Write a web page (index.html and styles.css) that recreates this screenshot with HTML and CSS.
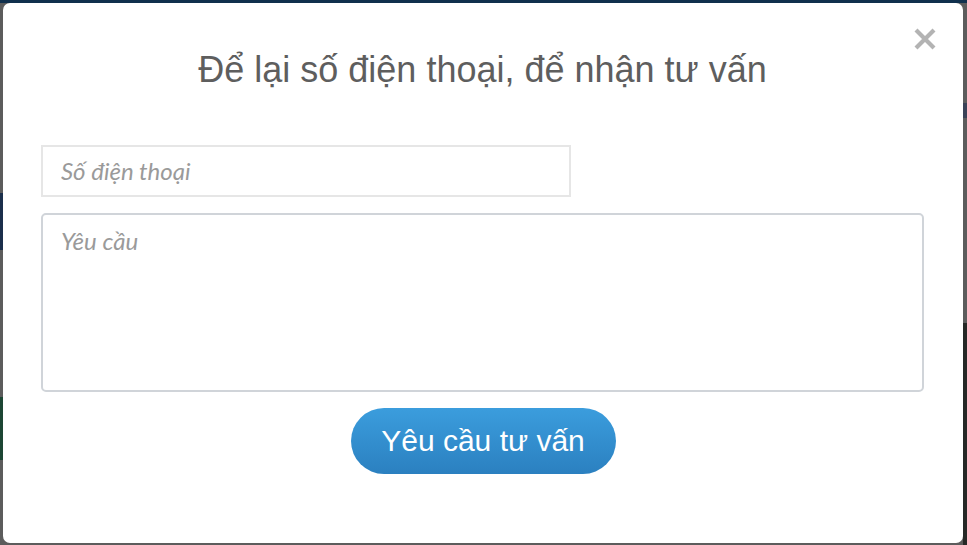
FILE: index.html
```html
<!DOCTYPE html>
<html lang="vi">
<head>
<meta charset="utf-8">
<title>Tư vấn</title>
<link rel="stylesheet" href="styles.css">
</head>
<body>
<div class="backdrop"></div>
<div class="modal">
  <button class="close" type="button" aria-label="Đóng">
    <svg width="24" height="22" viewBox="0 0 24 22"><path d="M3 2 L21 20 M21 2 L3 20" stroke="#b3b3b3" stroke-width="4.2" stroke-linecap="butt"/></svg>
  </button>
  <h2 class="title">Để lại số điện thoại, để nhận tư vấn</h2>
  <form class="form">
    <input class="phone" type="text" placeholder="Số điện thoại">
    <textarea class="request" placeholder="Yêu cầu"></textarea>
    <div class="actions">
      <button class="submit" type="button">Yêu cầu tư vấn</button>
    </div>
  </form>
</div>
</body>
</html>
```

FILE: styles.css
```css
html, body {
  margin: 0;
  padding: 0;
  height: 100%;
  overflow: hidden;
}
body {
  font-family: "Liberation Sans", Arial, sans-serif;
}
.backdrop {
  position: fixed;
  inset: 0;
  background:
    linear-gradient(#10304d, #10304d) 0 0 / 100% 3px no-repeat,
    linear-gradient(#1b2f4b, #1b2f4b) 0 193px / 3px 57px no-repeat,
    linear-gradient(#1c4634, #1c4634) 0 397px / 3px 63px no-repeat,
    linear-gradient(#3a4257, #3a4257) right 0 top 103px / 4px 15px no-repeat,
    linear-gradient(#262826, #262826) right 0 top 323px / 4px 222px no-repeat,
    #5c5c5c;
}
.modal {
  position: fixed;
  left: 3px;
  top: 3px;
  width: 960px;
  height: 540px;
  box-sizing: border-box;
  background: #fff;
  border-radius: 7px;
  padding: 46px 39px 0 38px;
}
.close {
  position: absolute;
  top: 25px;
  right: 26px;
  width: 24px;
  height: 22px;
  padding: 0;
  border: 0;
  background: none;
  cursor: pointer;
  display: flex;
}
.title {
  margin: 0;
  text-align: center;
  font-weight: normal;
  font-size: 36px;
  line-height: 42px;
  color: #5e5e5e;
}
.form {
  margin-top: 54px;
  display: flex;
  flex-direction: column;
  gap: 16px;
}
.phone {
  width: 530px;
  height: 52px;
  box-sizing: border-box;
  border: 2px solid #e6e6e6;
  border-radius: 0;
  padding: 0 18px 1px;
  font-family: Lato, "Noto Sans", sans-serif;
  font-style: italic;
  font-size: 24px;
  color: #555;
  outline: none;
}
.request {
  width: 100%;
  height: 179px;
  box-sizing: border-box;
  border: 2px solid #d0d4d9;
  border-radius: 5px;
  padding: 11px 18px;
  font-family: Lato, "Noto Sans", sans-serif;
  font-style: italic;
  font-size: 24px;
  line-height: 30px;
  color: #555;
  resize: none;
  outline: none;
}
.phone::placeholder,
.request::placeholder {
  color: #9a9a9a;
  opacity: 1;
}
.actions {
  display: flex;
  justify-content: center;
}
.submit {
  width: 265px;
  height: 66px;
  margin-left: 1px;
  border: 0;
  border-radius: 33px;
  background: linear-gradient(#3b9ddd, #2b80c0);
  color: #fff;
  font-family: "Liberation Sans", Arial, sans-serif;
  font-size: 30px;
  cursor: pointer;
}
```
